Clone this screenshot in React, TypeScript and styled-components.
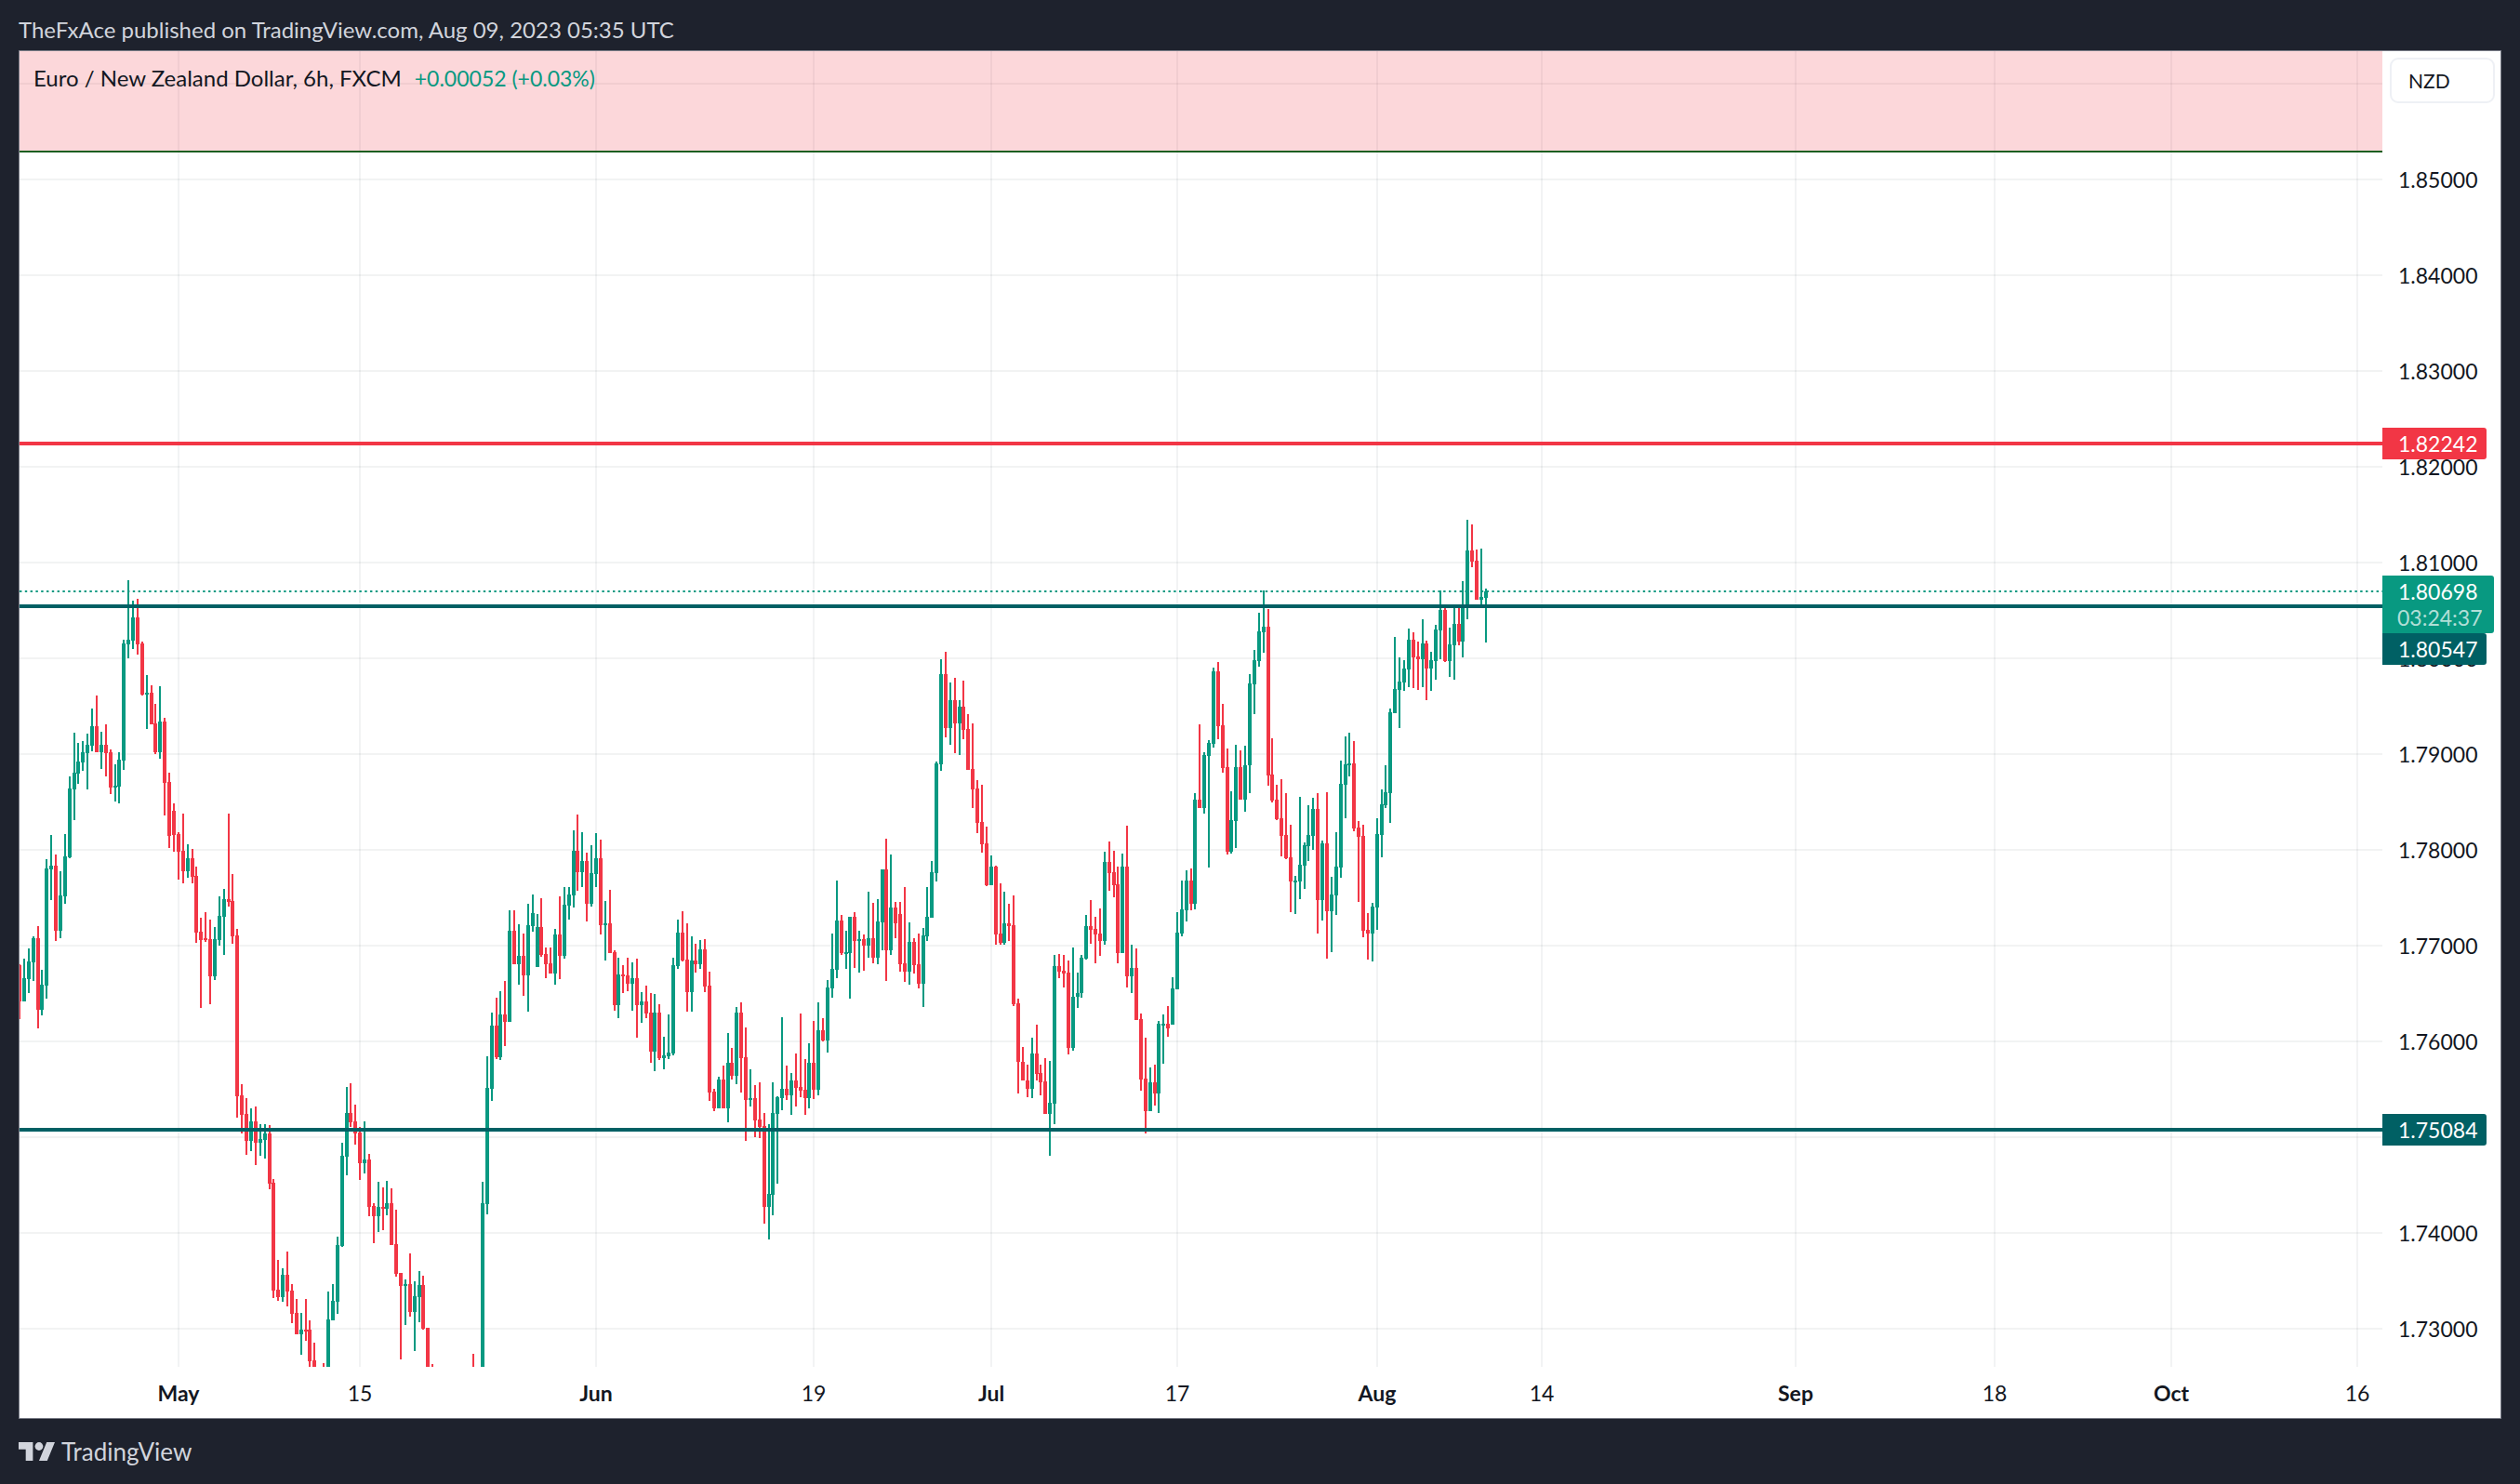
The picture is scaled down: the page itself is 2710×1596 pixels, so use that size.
// Vendor imports
import React from 'react';
import styled, { createGlobalStyle } from 'styled-components';

const fontStack = `Lato, "Noto Sans", "Liberation Sans", sans-serif`;
const dark = '#1e222d';
const up = '#089981';
const down = '#f23645';
const level = '#006064';

const GlobalStyle = createGlobalStyle`
  html, body {
    margin: 0;
    padding: 0;
    background: ${dark};
    overflow: hidden;
  }
`;

const Page = styled.div`
  display: flex;
  flex-direction: column;
  width: 2710px;
  height: 1596px;
  font-family: ${fontStack};
  background: ${dark};
`;

const Header = styled.div`
  display: flex;
  align-items: center;
  height: 54px;
  padding: 8px 20px 0;
  box-sizing: border-box;
  color: #d1d4dc;
  font-size: 24px;
`;

const Frame = styled.div`
  display: grid;
  grid-template-columns: 2541px 127px;
  grid-template-rows: 1415px 55px;
  margin: 0 20px;
  border: 1px solid #787b86;
  background: #fff;
`;

const Pane = styled.div`
  position: relative;
  overflow: hidden;
`;

const Legend = styled.div`
  position: absolute;
  left: 15px;
  top: 16px;
  display: flex;
  gap: 14px;
  color: #131722;
  font-size: 24px;
  line-height: 26px;
`;

const Change = styled.span`
  color: ${up};
  font-size: 23px;
`;

const PriceAxis = styled.div`
  position: relative;
  color: #131722;
  font-size: 23px;
`;

const CurrencyButton = styled.div`
  position: absolute;
  left: 8px;
  top: 7px;
  box-sizing: border-box;
  width: 113px;
  height: 49px;
  padding-left: 18px;
  border: 2px solid #eef0f5;
  border-radius: 9px;
  font-size: 21px;
  line-height: 45px;
  background: #fff;
`;

const PriceTick = styled.div`
  position: absolute;
  left: 17px;
  line-height: 26px;
  transform: translateY(-50%);
`;

const PriceTag = styled.div<{ $bg: string; $wide?: boolean }>`
  position: absolute;
  left: 0;
  box-sizing: border-box;
  width: ${(props) => (props.$wide ? 120 : 112)}px;
  padding-left: 17px;
  border-radius: 0 3px 3px 0;
  color: #fff;
  line-height: 34px;
  background: ${(props) => props.$bg};
`;

const Countdown = styled.div`
  margin-top: -4px;
  margin-left: -1px;
  padding-bottom: 2px;
  color: rgba(255, 255, 255, 0.7);
  line-height: 30px;
`;

const TimeAxis = styled.div`
  position: relative;
  color: #131722;
  font-size: 23px;
`;

const TimeTick = styled.div<{ $month: boolean }>`
  position: absolute;
  top: 15px;
  line-height: 26px;
  font-weight: ${(props) => (props.$month ? 700 : 400)};
  transform: translateX(-50%);
`;

const Corner = styled.div``;

const Footer = styled.div`
  display: flex;
  align-items: center;
  gap: 7px;
  height: 70px;
  padding: 0 20px;
  box-sizing: border-box;
  color: #d1d4dc;
  font-size: 26px;
`;

const PANE_LEFT = 21;
const PANE_TOP = 55;
const PANE_WIDTH = 2541;
const PANE_HEIGHT = 1415;

// y of a price, in page pixels
const priceY = (price: number) => 605 + (1.81 - price) * 10300;
const barX = (index: number) => Math.round(21 + 4.882 * index);

const priceTicks = [
  1.85, 1.84, 1.83, 1.82, 1.81, 1.8, 1.79, 1.78, 1.77, 1.76, 1.75, 1.74, 1.73,
];

const timeTicks: [number, string, boolean][] = [
  [192, 'May', true],
  [387, '15', false],
  [641, 'Jun', true],
  [875, '19', false],
  [1066, 'Jul', true],
  [1266, '17', false],
  [1481, 'Aug', true],
  [1658, '14', false],
  [1931, 'Sep', true],
  [2145, '18', false],
  [2335, 'Oct', true],
  [2535, '16', false],
];

// high, body top, body bottom, low (page pixels), 1 = rising
type Bar = [number, number, number, number, number];

const bars: Bar[] = [
  [1037, 1038, 1077, 1096, 0], [1031, 1052, 1077, 1077, 1], [1020, 1034, 1053, 1068, 1], [1007, 1009, 1035, 1055, 1],
  [996, 1009, 1086, 1106, 0], [1043, 1059, 1086, 1092, 1], [924, 934, 1060, 1074, 1], [898, 931, 935, 968, 1],
  [919, 931, 1001, 1012, 0], [937, 963, 1001, 1009, 1], [897, 921, 964, 972, 1], [835, 848, 922, 923, 1],
  [788, 831, 849, 882, 1], [799, 819, 832, 843, 1], [797, 809, 820, 829, 1], [789, 801, 810, 849, 1],
  [762, 781, 802, 808, 1], [748, 781, 809, 809, 0], [787, 801, 809, 827, 1], [779, 801, 810, 835, 0],
  [806, 809, 847, 854, 0], [822, 845, 847, 862, 1], [809, 817, 846, 864, 1], [688, 692, 818, 828, 1],
  [624, 688, 693, 708, 1], [646, 664, 689, 698, 1], [644, 664, 693, 704, 0], [690, 692, 747, 748, 0],
  [726, 745, 747, 784, 1], [737, 745, 779, 779, 0], [757, 778, 809, 811, 0], [738, 776, 809, 816, 1],
  [772, 776, 842, 877, 0], [831, 841, 899, 912, 0], [864, 872, 898, 916, 0], [895, 897, 916, 946, 0],
  [875, 915, 937, 950, 0], [908, 923, 937, 944, 1], [913, 923, 943, 950, 0], [932, 942, 1003, 1014, 0],
  [987, 1002, 1011, 1084, 0], [981, 1009, 1011, 1013, 0], [989, 1010, 1050, 1080, 0], [997, 1010, 1050, 1054, 1],
  [964, 985, 1011, 1017, 1], [956, 967, 986, 1027, 1], [875, 967, 970, 975, 0], [940, 969, 1007, 1015, 0],
  [999, 1006, 1179, 1202, 0], [1166, 1178, 1199, 1219, 0], [1181, 1198, 1227, 1242, 0], [1192, 1206, 1227, 1238, 1],
  [1190, 1206, 1229, 1253, 0], [1209, 1225, 1229, 1243, 1], [1209, 1219, 1226, 1246, 1], [1210, 1219, 1273, 1279, 0],
  [1268, 1272, 1388, 1396, 0], [1355, 1387, 1395, 1399, 0], [1364, 1371, 1395, 1400, 1], [1346, 1371, 1389, 1405, 0],
  [1381, 1388, 1413, 1423, 0], [1397, 1412, 1435, 1435, 0], [1412, 1430, 1435, 1457, 1], [1397, 1430, 1431, 1442, 0],
  [1420, 1430, 1464, 1470, 0], [1444, 1463, 1490, 1500, 0], [1480, 1490, 1500, 1510, 0], [1466, 1490, 1500, 1510, 0],
  [1389, 1419, 1500, 1510, 1], [1381, 1399, 1420, 1420, 1], [1330, 1339, 1400, 1413, 1], [1229, 1243, 1340, 1341, 1],
  [1169, 1197, 1244, 1264, 1], [1165, 1197, 1207, 1212, 0], [1188, 1206, 1219, 1231, 0], [1212, 1218, 1251, 1269, 0],
  [1206, 1247, 1251, 1262, 1], [1241, 1247, 1298, 1308, 0], [1294, 1297, 1308, 1337, 0], [1271, 1298, 1308, 1325, 1],
  [1277, 1298, 1300, 1323, 0], [1270, 1294, 1300, 1307, 1], [1278, 1294, 1339, 1339, 0], [1301, 1338, 1370, 1373, 0],
  [1369, 1369, 1383, 1462, 0], [1376, 1381, 1383, 1425, 1], [1348, 1381, 1411, 1416, 0], [1378, 1394, 1411, 1453, 1],
  [1367, 1382, 1395, 1422, 1], [1372, 1382, 1429, 1430, 0], [1428, 1428, 1490, 1500, 0], [1467, 1490, 1500, 1510, 0],
  [1480, 1490, 1500, 1510, 0], [1480, 1490, 1500, 1510, 0], [1480, 1490, 1500, 1510, 1], [1480, 1490, 1500, 1510, 0],
  [1480, 1490, 1500, 1510, 1], [1480, 1490, 1500, 1510, 0], [1480, 1490, 1500, 1510, 1], [1480, 1490, 1500, 1510, 0],
  [1456, 1490, 1500, 1510, 0], [1480, 1490, 1500, 1510, 1], [1271, 1294, 1490, 1500, 1], [1136, 1170, 1295, 1306, 1],
  [1089, 1103, 1171, 1184, 1], [1073, 1103, 1137, 1139, 0], [1066, 1091, 1137, 1140, 1], [1055, 1091, 1099, 1125, 0],
  [979, 1001, 1099, 1099, 1], [979, 1001, 1037, 1037, 0], [994, 1028, 1037, 1059, 1], [1004, 1028, 1049, 1071, 0],
  [972, 995, 1049, 1088, 1], [962, 982, 996, 1002, 1], [983, 997, 1040, 1040, 1], [966, 997, 1027, 1029, 0],
  [1019, 1026, 1037, 1052, 0], [1019, 1036, 1047, 1047, 0], [999, 1005, 1047, 1059, 1], [964, 1005, 1028, 1053, 0],
  [954, 973, 1028, 1031, 1], [954, 962, 974, 989, 1], [893, 915, 963, 976, 1], [876, 915, 938, 958, 0],
  [895, 926, 938, 954, 1], [917, 926, 972, 991, 0], [909, 939, 972, 975, 1], [896, 923, 940, 954, 1],
  [903, 923, 995, 1005, 0], [969, 993, 995, 1033, 1], [957, 993, 1025, 1025, 0], [1022, 1024, 1081, 1087, 0],
  [1030, 1048, 1081, 1095, 1], [1038, 1048, 1050, 1068, 0], [1030, 1049, 1058, 1066, 0], [1035, 1052, 1058, 1087, 1],
  [1031, 1052, 1081, 1116, 0], [1067, 1077, 1081, 1100, 1], [1060, 1077, 1090, 1095, 0], [1068, 1089, 1131, 1143, 0],
  [1069, 1089, 1131, 1152, 1], [1080, 1089, 1138, 1140, 0], [1115, 1135, 1138, 1150, 1], [1091, 1132, 1136, 1139, 1],
  [1030, 1038, 1133, 1135, 1], [989, 1003, 1039, 1042, 1], [980, 1003, 1033, 1034, 0], [993, 1032, 1067, 1088, 0],
  [1007, 1033, 1067, 1088, 1], [1015, 1033, 1037, 1046, 0], [1011, 1021, 1037, 1042, 1], [1010, 1021, 1061, 1067, 0],
  [1045, 1060, 1175, 1184, 0], [1171, 1174, 1192, 1195, 0], [1158, 1161, 1192, 1192, 1], [1146, 1161, 1192, 1192, 0],
  [1111, 1143, 1192, 1207, 1], [1127, 1143, 1157, 1161, 0], [1083, 1089, 1157, 1166, 1], [1078, 1089, 1138, 1175, 0],
  [1105, 1137, 1183, 1227, 0], [1150, 1181, 1183, 1190, 1], [1167, 1181, 1205, 1223, 0], [1164, 1204, 1212, 1224, 0],
  [1197, 1211, 1298, 1316, 0], [1209, 1284, 1298, 1333, 1], [1164, 1197, 1285, 1307, 1], [1179, 1180, 1198, 1273, 1],
  [1094, 1171, 1181, 1194, 1], [1146, 1171, 1178, 1183, 0], [1154, 1162, 1178, 1199, 1], [1133, 1162, 1170, 1190, 0],
  [1090, 1169, 1173, 1180, 0], [1139, 1172, 1181, 1199, 0], [1122, 1143, 1181, 1192, 1], [1098, 1143, 1172, 1182, 0],
  [1078, 1108, 1172, 1178, 1], [1095, 1108, 1119, 1120, 0], [1054, 1062, 1119, 1132, 1], [1004, 1042, 1063, 1073, 1],
  [947, 990, 1043, 1052, 1], [984, 990, 1025, 1027, 0], [1001, 1024, 1025, 1042, 1], [986, 986, 1025, 1074, 1],
  [981, 986, 1012, 1041, 0], [1001, 1010, 1012, 1046, 1], [1005, 1010, 1017, 1044, 0], [959, 1009, 1017, 1030, 1],
  [971, 1009, 1030, 1036, 0], [967, 991, 1030, 1037, 1], [935, 935, 992, 1022, 1], [902, 935, 1022, 1055, 0],
  [919, 976, 1022, 1027, 1], [970, 976, 993, 1009, 0], [970, 983, 1037, 1045, 0], [954, 1036, 1045, 1056, 0],
  [992, 1013, 1045, 1059, 1], [1009, 1013, 1038, 1047, 0], [1004, 1037, 1058, 1063, 0], [998, 1006, 1058, 1083, 1],
  [954, 986, 1007, 1012, 1], [926, 938, 987, 987, 1], [819, 821, 939, 948, 1], [709, 725, 822, 829, 1],
  [701, 725, 783, 793, 0], [734, 753, 783, 801, 1], [729, 753, 778, 810, 0], [753, 760, 778, 812, 1],
  [732, 760, 785, 795, 0], [768, 784, 828, 828, 0], [778, 827, 849, 869, 0], [839, 848, 885, 896, 0],
  [844, 884, 908, 917, 0], [889, 907, 952, 953, 0], [920, 932, 952, 952, 1], [931, 932, 1005, 1016, 0],
  [950, 1004, 1014, 1016, 0], [959, 993, 1014, 1016, 1], [972, 993, 996, 1012, 0], [963, 995, 1080, 1082, 0],
  [1074, 1079, 1142, 1176, 0], [1126, 1142, 1162, 1162, 0], [1145, 1162, 1171, 1180, 0], [1116, 1133, 1171, 1181, 1],
  [1102, 1133, 1155, 1162, 0], [1145, 1154, 1164, 1178, 0], [1138, 1163, 1198, 1198, 0], [1141, 1186, 1198, 1243, 1],
  [1027, 1039, 1187, 1209, 1], [1026, 1039, 1045, 1052, 0], [1027, 1044, 1047, 1062, 0], [1033, 1046, 1127, 1134, 0],
  [1019, 1072, 1127, 1130, 1], [1046, 1068, 1072, 1084, 1], [1027, 1030, 1068, 1073, 1], [984, 996, 1031, 1032, 1],
  [968, 996, 1000, 1015, 0], [986, 999, 1005, 1036, 0], [977, 1004, 1012, 1028, 0], [916, 927, 1012, 1016, 1],
  [905, 927, 939, 958, 0], [915, 938, 952, 965, 0], [932, 951, 1025, 1036, 0], [918, 932, 1025, 1025, 1],
  [888, 932, 1050, 1062, 0], [1016, 1041, 1050, 1068, 1], [1020, 1041, 1097, 1097, 0], [1090, 1096, 1161, 1173, 0],
  [1116, 1160, 1195, 1219, 0], [1148, 1164, 1195, 1195, 1], [1145, 1164, 1176, 1189, 0], [1098, 1101, 1176, 1197, 1],
  [1091, 1101, 1102, 1144, 1], [1082, 1101, 1106, 1115, 0], [1051, 1063, 1102, 1102, 1], [981, 1003, 1064, 1064, 1],
  [947, 978, 1004, 1007, 1], [936, 947, 979, 991, 1], [934, 947, 972, 979, 0], [853, 860, 972, 978, 1],
  [779, 860, 869, 869, 0], [809, 812, 869, 875, 1], [796, 799, 813, 933, 1], [718, 722, 800, 804, 1],
  [712, 722, 781, 795, 0], [757, 780, 826, 831, 0], [805, 825, 916, 919, 0], [851, 882, 916, 918, 1],
  [801, 825, 883, 912, 1], [807, 825, 860, 860, 0], [802, 823, 860, 873, 1], [725, 735, 823, 853, 1],
  [699, 710, 736, 768, 1], [659, 679, 711, 717, 1], [635, 674, 680, 702, 1], [655, 674, 834, 845, 0],
  [794, 833, 861, 863, 0], [844, 860, 881, 882, 0], [838, 880, 899, 921, 0], [853, 898, 923, 924, 0],
  [887, 922, 948, 981, 0], [942, 947, 948, 983, 1], [857, 930, 948, 967, 1], [906, 909, 931, 956, 1],
  [866, 898, 910, 926, 1], [858, 870, 899, 914, 1], [853, 870, 968, 1004, 0], [904, 907, 968, 990, 1],
  [852, 907, 980, 1031, 0], [943, 962, 980, 1024, 1], [895, 932, 963, 984, 1], [818, 843, 933, 944, 1],
  [792, 822, 844, 880, 1], [788, 821, 822, 835, 1], [797, 821, 891, 894, 0], [883, 890, 900, 970, 0],
  [887, 899, 1001, 1008, 0], [982, 1000, 1004, 1032, 0], [971, 975, 1004, 1034, 1], [880, 897, 976, 1000, 1],
  [849, 865, 898, 922, 1], [823, 852, 866, 869, 1], [762, 766, 853, 885, 1], [685, 741, 767, 767, 1],
  [707, 733, 742, 783, 1], [710, 719, 734, 743, 1], [676, 688, 720, 739, 1], [680, 688, 707, 740, 0],
  [690, 706, 709, 742, 0], [666, 692, 709, 739, 1], [689, 692, 719, 753, 0], [701, 710, 719, 743, 1],
  [672, 677, 711, 731, 1], [635, 656, 678, 709, 1], [650, 656, 711, 712, 0], [675, 693, 711, 728, 1],
  [652, 671, 694, 731, 1], [654, 671, 690, 694, 0], [625, 651, 690, 707, 1], [559, 592, 653, 666, 1],
  [564, 592, 604, 610, 0], [591, 603, 645, 645, 0], [590, 642, 645, 651, 1], [633, 636, 643, 691, 1],
];

function ChartDrawing() {
  return (
    <svg
      width={PANE_WIDTH}
      height={PANE_HEIGHT}
      viewBox={`${PANE_LEFT} ${PANE_TOP} ${PANE_WIDTH} ${PANE_HEIGHT}`}
      shapeRendering="crispEdges"
      style={{ display: 'block' }}
    >
      {timeTicks.map(([x]) => (
        <rect key={x} x={x - 1} y={0} width={2} height={1470} fill="#f2f3f4" />
      ))}
      {[1.86, ...priceTicks].map((price) => (
        <rect
          key={price}
          x={0}
          y={Math.round(priceY(price)) - 1}
          width={2562}
          height={2}
          fill="#2a2e39"
          fillOpacity={0.06}
        />
      ))}

      <rect x={21} y={55} width={2541} height={107} fill={down} fillOpacity={0.2} />
      <rect x={21} y={162} width={2541} height={2} fill="#1b5e20" />

      <line
        x1={21}
        x2={2562}
        y1={636}
        y2={636}
        stroke={up}
        strokeWidth={2}
        strokeDasharray="2.4 3.4"
        shapeRendering="auto"
      />

      {bars.map(([high, top, bottom, low, rising], index) => {
        const x = barX(index);
        const fill = rising ? up : down;
        return (
          <g key={index} fill={fill}>
            <rect x={x - 1} y={high} width={2} height={low - high} />
            <rect x={x - 2} y={top} width={4} height={Math.max(bottom - top, 2)} />
          </g>
        );
      })}

      <rect x={21} y={475} width={2541} height={4} fill={down} />
      <rect x={21} y={650} width={2541} height={4} fill={level} />
      <rect x={21} y={1213} width={2541} height={4} fill={level} />
    </svg>
  );
}

function TradingViewLogo() {
  return (
    <svg width={39} height={20} viewBox="0 4 35.5 18" fill="#d1d4dc">
      <path d="M14 22H7V11H0V4h14v18zM28 22h-8l7.5-18h8L28 22z" />
      <circle cx={20} cy={8} r={4} />
    </svg>
  );
}

export default function App() {
  return (
    <Page>
      <GlobalStyle />
      <Header>TheFxAce published on TradingView.com, Aug 09, 2023 05:35 UTC</Header>

      <Frame>
        <Pane>
          <ChartDrawing />
          <Legend>
            <span>Euro / New Zealand Dollar, 6h, FXCM</span>
            <Change>+0.00052 (+0.03%)</Change>
          </Legend>
        </Pane>

        <PriceAxis>
          <CurrencyButton>NZD</CurrencyButton>
          {/* 1.75000 sits fully behind the 1.75084 tag, so it has no label */}
          {priceTicks
            .filter((price) => price !== 1.75)
            .map((price) => (
              <PriceTick key={price} style={{ top: priceY(price) - PANE_TOP }}>
                {price.toFixed(5)}
              </PriceTick>
            ))}
          <PriceTag $bg={down} style={{ top: 405 }}>
            1.82242
          </PriceTag>
          <PriceTag $bg={level} style={{ top: 626 }}>
            1.80547
          </PriceTag>
          <PriceTag $bg={level} style={{ top: 1143 }}>
            1.75084
          </PriceTag>
          <PriceTag $bg={up} $wide style={{ top: 564 }}>
            1.80698
            <Countdown>03:24:37</Countdown>
          </PriceTag>
        </PriceAxis>

        <TimeAxis>
          {timeTicks.map(([x, label, month]) => (
            <TimeTick key={x} $month={month} style={{ left: x - PANE_LEFT }}>
              {label}
            </TimeTick>
          ))}
        </TimeAxis>
        <Corner />
      </Frame>

      <Footer>
        <TradingViewLogo />
        <span>TradingView</span>
      </Footer>
    </Page>
  );
}
